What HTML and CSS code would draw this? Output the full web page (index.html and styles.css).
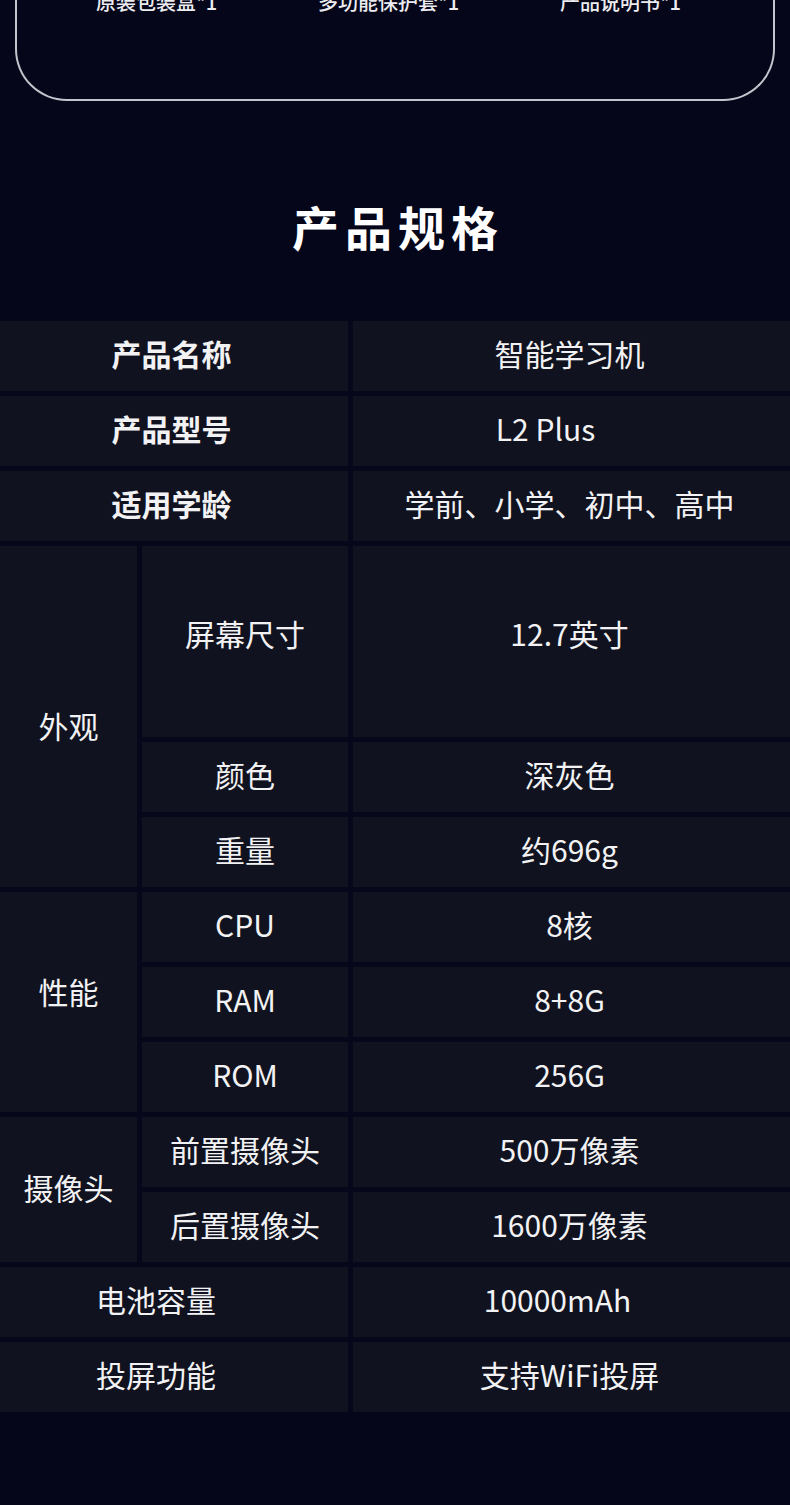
FILE: index.html
```html
<!DOCTYPE html>
<html lang="zh-CN">
<head>
<meta charset="utf-8">
<title>产品规格</title>
<link rel="stylesheet" href="styles.css">
</head>
<body>
<div class="page">
  <section class="package">
    <div class="package-items">
      <span>原装包装盒*1</span>
      <span>多功能保护套*1</span>
      <span>产品说明书*1</span>
    </div>
  </section>

  <h2 class="spec-title">产品规格</h2>

  <div class="spec-table">
    <div class="cell head span2">产品名称</div>
    <div class="cell val">智能学习机</div>

    <div class="cell head span2">产品型号</div>
    <div class="cell val val-model">L2 Plus</div>

    <div class="cell head span2">适用学龄</div>
    <div class="cell val">学前、小学、初中、高中</div>

    <div class="cell group group-look">外观</div>
    <div class="cell sub sub-tall">屏幕尺寸</div>
    <div class="cell val sub-tall">12.7英寸</div>
    <div class="cell sub">颜色</div>
    <div class="cell val">深灰色</div>
    <div class="cell sub">重量</div>
    <div class="cell val">约696g</div>

    <div class="cell group group-perf">性能</div>
    <div class="cell sub">CPU</div>
    <div class="cell val">8核</div>
    <div class="cell sub">RAM</div>
    <div class="cell val">8+8G</div>
    <div class="cell sub">ROM</div>
    <div class="cell val">256G</div>

    <div class="cell group group-cam">摄像头</div>
    <div class="cell sub">前置摄像头</div>
    <div class="cell val">500万像素</div>
    <div class="cell sub">后置摄像头</div>
    <div class="cell val">1600万像素</div>

    <div class="cell plain span2">电池容量</div>
    <div class="cell val val-battery">10000mAh</div>

    <div class="cell plain span2">投屏功能</div>
    <div class="cell val">支持WiFi投屏</div>
  </div>
</div>
</body>
</html>
```

FILE: styles.css
```css
html, body {
  margin: 0;
  padding: 0;
  background: #05061a;
}

.page {
  width: 790px;
  min-height: 1505px;
  background: #05061a;
  color: #f2f2f4;
  font-family: "Noto Sans CJK SC", "Noto Sans", sans-serif;
  overflow: hidden;
}

/* package contents card (top cut off) */
.package {
  display: flow-root;
  margin: 0 15px;
  height: 101px;
  box-sizing: border-box;
  border: 2px solid #c4c4cc;
  border-top: none;
  border-radius: 0 0 52px 52px;
}

.package-items {
  display: flex;
  justify-content: space-between;
  margin-top: -8px;
  padding: 0 92px 0 79px;
  font-size: 20px;
  line-height: 20px;
  font-weight: 500;
  color: #ececf0;
}

.spec-title {
  margin: 101px 0 72px;
  padding-left: 6px;
  font-size: 47px;
  line-height: 47px;
  font-weight: 700;
  letter-spacing: 6px;
  text-align: center;
  color: #ffffff;
}

/* spec grid */
.spec-table {
  display: grid;
  grid-template-columns: 137px 206px 437px;
  grid-template-rows: repeat(3, 70px) 191px repeat(9, 70px);
  column-gap: 5px;
  row-gap: 5px;
  background: #06071a;
}

.cell {
  display: flex;
  align-items: center;
  justify-content: center;
  background: #11121f;
  font-size: 30px;
  line-height: 36px;
  white-space: nowrap;
  padding-bottom: 6px;
}

.span2 {
  grid-column: 1 / 3;
}

.head {
  font-weight: 700;
  padding-right: 5px;
}

.val {
  grid-column: 3;
  padding-right: 4px;
}

.val-model {
  padding-right: 52px;
}

.val-battery {
  padding-right: 28px;
}

.sub {
  grid-column: 2;
}

.sub-tall {
  padding-bottom: 17px;
}

.val.sub-tall {
  grid-column: 3;
}

.group {
  grid-column: 1;
}

.group-look {
  grid-row: 4 / 7;
  padding-top: 22px;
}

.group-perf {
  grid-row: 7 / 10;
  padding-bottom: 22px;
}

.group-cam {
  grid-row: 10 / 12;
}

.plain {
  padding-right: 36px;
}
```
